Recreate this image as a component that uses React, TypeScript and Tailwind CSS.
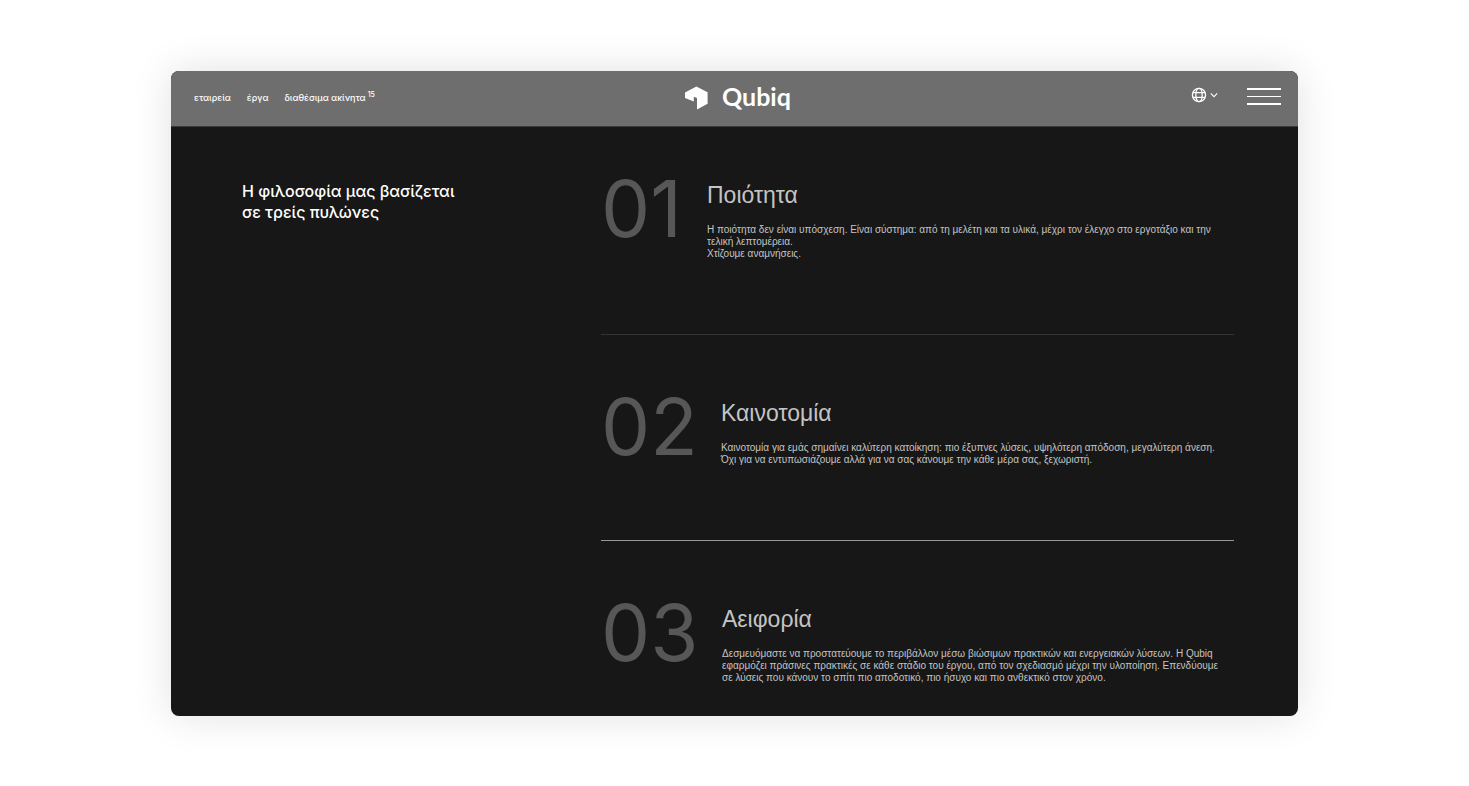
const navLinks = [
  { label: 'εταιρεία', href: '#company' },
  { label: 'έργα', href: '#projects' },
  { label: 'διαθέσιμα ακίνητα', href: '#available', count: 15 },
];

const pillars = [
  {
    number: '01',
    title: 'Ποιότητα',
    lines: [
      'Η ποιότητα δεν είναι υπόσχεση. Είναι σύστημα: από τη μελέτη και τα υλικά, μέχρι τον έλεγχο στο εργοτάξιο και την τελική λεπτομέρεια.',
      'Χτίζουμε αναμνήσεις.',
    ],
    numberClass: 'w-[106px]',
    borderClass: 'border-b border-[#333333]',
  },
  {
    number: '02',
    title: 'Καινοτομία',
    lines: [
      'Καινοτομία για εμάς σημαίνει καλύτερη κατοίκηση: πιο έξυπνες λύσεις, υψηλότερη απόδοση, μεγαλύτερη άνεση.',
      'Όχι για να εντυπωσιάζουμε αλλά για να σας κάνουμε την κάθε μέρα σας, ξεχωριστή.',
    ],
    numberClass: 'w-[120px]',
    borderClass: 'border-b border-[#969696]',
  },
  {
    number: '03',
    title: 'Αειφορία',
    lines: [
      'Δεσμευόμαστε να προστατεύουμε το περιβάλλον μέσω βιώσιμων πρακτικών και ενεργειακών λύσεων. Η Qubiq εφαρμόζει πράσινες πρακτικές σε κάθε στάδιο του έργου, από τον σχεδιασμό μέχρι την υλοποίηση. Επενδύουμε σε λύσεις που κάνουν το σπίτι πιο αποδοτικό, πιο ήσυχο και πιο ανθεκτικό στον χρόνο.',
    ],
    numberClass: 'w-[121px]',
    borderClass: '',
  },
];

function Logo() {
  return (
    <a href="#home" className="flex items-start justify-center gap-[14px] pb-px">
      <svg viewBox="0 0 24 24" className="h-6 w-6" fill="currentColor" aria-hidden="true">
        <path d="M12.4 0.6 23.6 6.2V17.8L13 23.4V12L9.8 10.8V15.6L1 12V6.6Z" />
      </svg>
      <span className="font-['Lato',sans-serif] text-[25px] leading-5 font-bold">Qubiq</span>
    </a>
  );
}

function Header() {
  return (
    <header className="grid h-14 grid-cols-3 items-center border-b border-[#3a3a3a] bg-[#6e6e6e] pr-[17px] pl-[23px] text-white">
      <nav className="flex gap-4 pb-[2px] text-[9px] leading-3 font-medium">
        {navLinks.map((link) => (
          <a key={link.label} href={link.href} className="whitespace-nowrap">
            {link.label}
            {link.count && <sup className="ml-[2px] text-[7px]">{link.count}</sup>}
          </a>
        ))}
      </nav>

      <Logo />

      <div className="flex items-center justify-end gap-[29px] pb-1">
        <button type="button" aria-label="Γλώσσα" className="flex items-center gap-[3px] pb-[3px]">
          <svg viewBox="0 0 16 16" className="h-4 w-4" fill="none" stroke="currentColor" strokeWidth="1.3" aria-hidden="true">
            <circle cx="8" cy="8" r="6.6" />
            <ellipse cx="8" cy="8" rx="3.2" ry="6.6" />
            <path d="M2 5.6h12M2 10.4h12" />
          </svg>
          <svg viewBox="0 0 8 8" className="h-2 w-2" fill="none" stroke="currentColor" strokeWidth="1.1" aria-hidden="true">
            <path d="M0.8 2.4 4 5.6 7.2 2.4" />
          </svg>
        </button>
        <button type="button" aria-label="Μενού" className="flex w-[34px] flex-col gap-[6px]">
          <span className="h-[2px] w-full bg-white" />
          <span className="h-px w-full bg-white" />
          <span className="h-[2px] w-full bg-white" />
        </button>
      </div>
    </header>
  );
}

export default function App() {
  return (
    <div className="min-h-screen bg-white px-[171px] pt-[71px] pb-[70px] font-['Inter',sans-serif]">
      <div className="overflow-hidden rounded-lg bg-[#171717] shadow-[0_0_40px_rgba(0,0,0,0.12)]">
        <Header />

        <main className="flex pr-16 pb-8 pl-[71px]">
          <h1 className="flex-1 pt-[54px] text-[16px] leading-[21px] font-medium text-white">
            Η φιλοσοφία μας βασίζεται
            <br />
            σε τρείς πυλώνες
          </h1>

          <div className="w-[633px] max-w-[64%]">
            {pillars.map((pillar) => (
              <section
                key={pillar.number}
                className={`flex pt-16 pb-[74px] first:pt-[54px] last:pb-0 ${pillar.borderClass}`}
              >
                <div
                  className={`h-14 shrink-0 text-[78px] leading-14 text-[#575757] ${pillar.numberClass}`}
                >
                  {pillar.number}
                </div>
                <div className="pr-2 font-['Liberation_Sans',sans-serif] text-[#c4c4c4]">
                  <h2 className="text-[23px] leading-7">{pillar.title}</h2>
                  <div className="mt-[15px] text-[10px] leading-3">
                    {pillar.lines.map((line) => (
                      <p key={line}>{line}</p>
                    ))}
                  </div>
                </div>
              </section>
            ))}
          </div>
        </main>
      </div>
    </div>
  );
}
